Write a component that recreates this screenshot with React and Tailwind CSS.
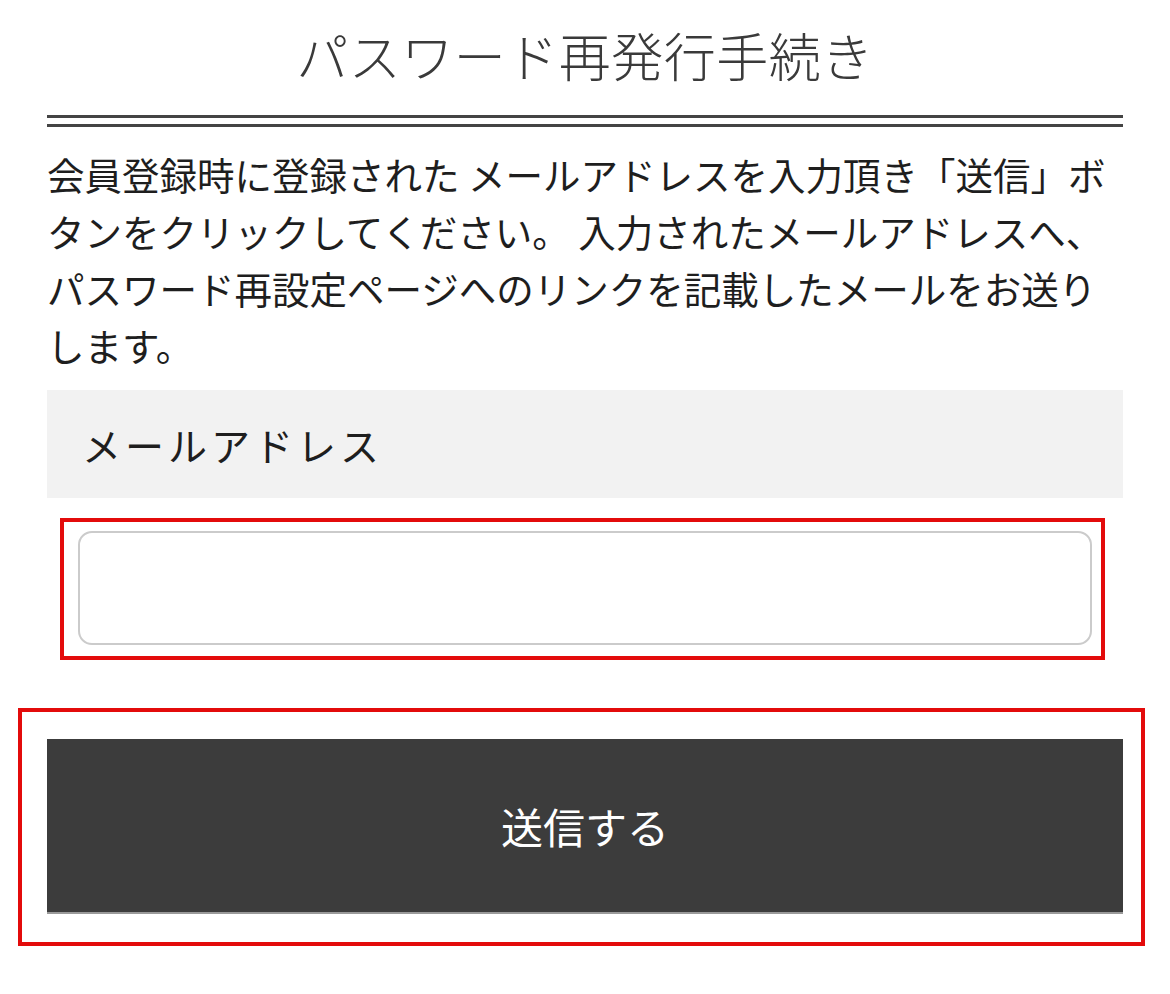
import { useState } from "react";

const font = { fontFamily: '"Noto Sans CJK JP", "Noto Sans", sans-serif' };

const App = () => {
  const [email, setEmail] = useState("");

  return (
    <div className="min-h-screen w-full bg-white" style={font}>
      <div className="px-[47px] pt-[16px]">
        <h1 className="text-center text-[52px] leading-[78px] font-light tracking-[0.5px] text-[#3a3a3a]">
          パスワード再発行手続き
        </h1>

        <div className="mt-[21px] flex flex-col gap-[6px]">
          <div className="h-[3px] bg-[#444]" />
          <div className="h-[3px] bg-[#444]" />
        </div>

        <p className="mt-[18px] text-[37.5px] leading-[57px] text-[#1e1e1e]">
          会員登録時に登録された メールアドレスを入力頂き「送信」ボ<br />
          タンをクリックしてください。 入力されたメールアドレスへ、<br />
          パスワード再設定ページへのリンクを記載したメールをお送り<br />
          します。
        </p>

        <div className="mt-[17px] h-[108px] bg-[#f2f2f2] flex items-center pl-[35px]">
          <span className="text-[39px] tracking-[4px] text-[#1e1e1e]">メールアドレス</span>
        </div>

        <div className="mt-[20px] ml-[13px] mr-[18px] border-4 border-[#e30b0b] pt-[9px] pb-[11px] pl-[14px] pr-[9px]">
          <input
            type="email"
            value={email}
            onChange={(e) => setEmail(e.target.value)}
            className="block w-full h-[114px] rounded-[14px] border-2 border-[#cbcbcb] bg-white px-4 text-[36px] outline-none"
          />
        </div>

        <div className="mt-[48px] -ml-[29px] -mr-[22px] border-4 border-[#e30b0b] pt-[27px] pb-[28px] pl-[25px] pr-[18px]">
          <button className="w-full h-[175px] bg-[#3c3c3c] border-b-2 border-[#9a9a9a] text-white text-[42px]">
            送信する
          </button>
        </div>
      </div>
    </div>
  );
};

export default App;
